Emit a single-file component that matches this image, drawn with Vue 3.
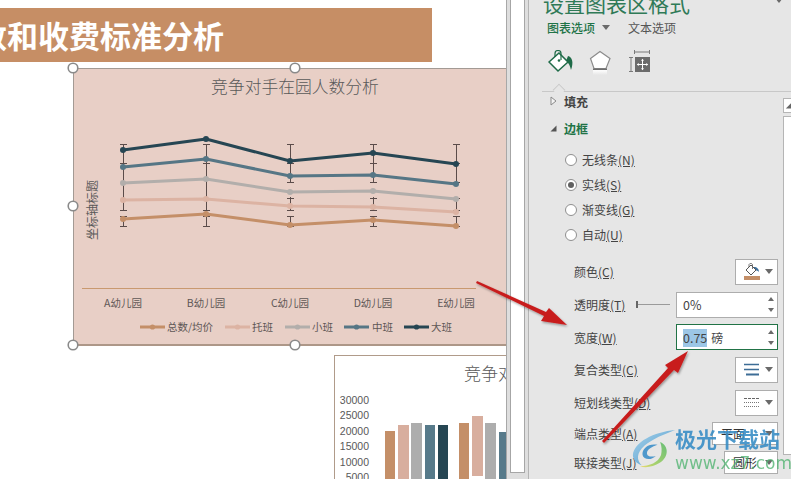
<script setup>
const xs = [123, 206, 290, 373, 456]
const series = [
  { name: '总数/均价', color: '#c48f68', ys: [219, 214, 225, 220, 226], lx: 140, tx: 167 },
  { name: '托班', color: '#dcb3a3', ys: [200, 199, 206, 207, 212], lx: 225, tx: 252 },
  { name: '小班', color: '#b2aeab', ys: [183, 179, 192, 191, 199], lx: 285, tx: 312 },
  { name: '中班', color: '#567685', ys: [167, 159, 176, 175, 184], lx: 344, tx: 372 },
  { name: '大班', color: '#264653', ys: [150, 139, 161, 153, 164], lx: 404, tx: 431 }
]
const pts = (s) => s.ys.map((y, i) => `${xs[i]},${y}`).join(' ')
const cats = ['A幼儿园', 'B幼儿园', 'C幼儿园', 'D幼儿园', 'E幼儿园']
const capsAll = [144, 163, 210, 216, 226]
const capsMid = [182, 198]
const segs = [[144, 183], [197, 210], [216, 226]]
const segsLong = [[144, 210], [216, 226]]
const handles = [[73, 68], [295, 68], [73, 206], [73, 345], [295, 345]]

const yTicks = [['30000', 404], ['25000', 419], ['20000', 435], ['15000', 450], ['10000', 466], ['5000', 481]]
const bars = [
  [385, 10, 431, '#c48f68'], [398, 11, 425, '#d8ae9e'], [411, 11, 423, '#adadad'],
  [425, 10, 425, '#577a8a'], [438, 10, 425, '#264653'], [459, 10, 423, '#c48f68'],
  [472, 11, 416, '#d8ae9e'], [485, 11, 423, '#adadad'], [499, 10, 432, '#577a8a']
]

const radios = [
  { label: '无线条', key: '(N)', on: false },
  { label: '实线', key: '(S)', on: true },
  { label: '渐变线', key: '(G)', on: false },
  { label: '自动', key: '(U)', on: false }
]
</script>

<template>
  <div class="screen">
    <main class="doc">
      <div class="banner">数和收费标准分析</div>

      <svg class="canvas" width="506" height="479" viewBox="0 0 506 479">
        <!-- second chart -->
        <rect x="334.5" y="355.5" width="180" height="130" fill="#fff" stroke="#b09b8a" />
        <text x="464" y="380" class="t2">竞争对手在园人数分析</text>
        <text v-for="t in yTicks" :key="t[0]" x="369" :y="t[1]" text-anchor="end" class="tick">{{ t[0] }}</text>
        <rect v-for="(b, i) in bars" :key="i" :x="b[0]" :width="b[1]" :y="b[2]" height="60" :fill="b[3]" />

        <!-- main chart -->
        <rect x="73.5" y="68.5" width="440" height="276" fill="#e8cfc6" stroke="#a39a94" />
        <line x1="73" y1="345" x2="506" y2="345" stroke="#ad9788" stroke-width="2" />
        <text x="295" y="93" text-anchor="middle" class="t1">竞争对手在园人数分析</text>
        <text transform="translate(97 240) rotate(-90)" class="axis">坐标轴标题</text>

        <g v-for="(x, i) in xs" :key="x" stroke="#5b4c4a" stroke-width="1" shape-rendering="crispEdges">
          <line v-for="(s, j) in (i >= 2 ? segs : segsLong)" :key="j" :x1="x" :x2="x" :y1="s[0]" :y2="s[1]" />
          <line v-for="c in capsAll" :key="c" :x1="x - 3" :x2="x + 4" :y1="c" :y2="c" />
          <template v-if="i >= 2">
            <line v-for="c in capsMid" :key="c" :x1="x - 3" :x2="x + 4" :y1="c" :y2="c" />
          </template>
        </g>

        <g v-for="s in series" :key="s.name">
          <polyline :points="pts(s)" fill="none" :stroke="s.color" stroke-width="3" stroke-linejoin="round" />
          <circle v-for="(y, i) in s.ys" :key="i" :cx="xs[i]" :cy="y" r="3" :fill="s.color" />
        </g>

        <line x1="82" y1="288.5" x2="476" y2="288.5" stroke="#c9996f" />
        <text v-for="(c, i) in cats" :key="c" :x="xs[i]" y="306.5" text-anchor="middle" class="cat">{{ c }}</text>

        <g v-for="s in series" :key="'l' + s.name">
          <line :x1="s.lx" :x2="s.lx + 25" y1="327" y2="327" :stroke="s.color" stroke-width="3" />
          <circle :cx="s.lx + 12.5" cy="327" r="2.6" :fill="s.color" />
          <text :x="s.tx" y="331" class="leg">{{ s.name }}</text>
        </g>

        <circle v-for="(h, i) in handles" :key="i" :cx="h[0]" :cy="h[1]" r="4.8" fill="#fff" stroke="#8a8a8a" stroke-width="1.6" />
      </svg>
    </main>

    <div class="strip"><div class="strip-track"></div></div>

    <aside class="panel">
      <header class="panel-head">
        <div class="panel-title">设置图表区格式</div>
        <i class="caret head-caret"></i>
        <div class="tabs">
          <span class="tab-on">图表选项</span>
          <i class="caret tab-caret"></i>
          <span class="tab-off">文本选项</span>
        </div>
        <div class="icons">
          <svg width="26" height="24" viewBox="0 0 26 24" class="ic">
            <path d="M20 6 C24 7 26 12 23 20 C22 16 21 13 18 11 Z" fill="#1f6b48" />
            <path d="M1 12 L11 3 L20 12 L10 21 Z" fill="#fff" stroke="#1f6b48" stroke-width="1.5" />
            <path d="M7 7 V3.5 A3 3 0 0 1 13 3.5 V10" fill="none" stroke="#1f6b48" stroke-width="1.2" />
            <circle cx="11" cy="10.5" r="1.3" fill="#1f6b48" />
          </svg>
          <svg width="24" height="26" viewBox="0 0 24 26" class="ic ic2">
            <defs>
              <linearGradient id="fade" x1="0" y1="0" x2="0" y2="1">
                <stop offset="0" stop-color="#fff" />
                <stop offset="1" stop-color="#fff" stop-opacity="0" />
              </linearGradient>
            </defs>
            <path d="M11 1.5 L21 8.5 L17 18.5 H5 L1.5 8.5 Z" fill="#fff" stroke="#8c8c8c" stroke-width="1.2" />
            <rect x="4" y="18.5" width="14" height="1.6" fill="#6e6e6e" />
            <rect x="4" y="20" width="14" height="5" fill="url(#fade)" />
          </svg>
          <svg width="24" height="26" viewBox="0 0 24 26" class="ic ic3">
            <path d="M7.500 0 V4 M22.500 0 V4 M7.500 2 H22.500 M2 7.500 H6 M2 21.500 H6 M4 7.500 V21.500" stroke="#7a7a7a" fill="none" />
            <rect x="8" y="7" width="15" height="15" fill="#6b6b6b" />
            <path d="M15.500 9.500 V19.500 M10.500 14.500 H20.500" stroke="#fff" />
            <path d="M15.500 8.800 L17 10.800 H14 Z M15.500 20.200 L17 18.200 H14 Z M9.800 14.500 L11.800 13 V16 Z M21.200 14.500 L19.200 13 V16 Z" fill="#fff" />
          </svg>
        </div>
        <div class="divider"><i class="notch"></i></div>
      </header>

      <div class="panel-body">
        <div class="content">
          <div class="section section-first"><svg width="7" height="10" class="tri" viewBox="0 0 7 10"><path d="M1 1 L6 5 L1 9 Z" fill="#f4f4f4" stroke="#8a8a8a" /></svg><span>填充</span></div>
          <div class="section section-on"><svg width="7" height="7" class="tri" viewBox="0 0 7 7"><path d="M6.500 0.500 V6.500 H0.500 Z" fill="#555" /></svg><span>边框</span></div>

          <div class="radios">
            <label v-for="r in radios" :key="r.key" class="radio">
              <i class="dot" :class="{ 'dot-on': r.on }"></i>
              <span>{{ r.label }}<u>{{ r.key }}</u></span>
            </label>
          </div>

          <div class="form">
            <div class="row">
              <span class="lbl">颜色<u>(C)</u></span>
              <div class="drop">
                <svg width="16" height="18" viewBox="0 0 16 18">
                  <path d="M10 4 C13 4 15 6 15 9 C14 8 13 7 10 7 Z" fill="#3c6f9c" />
                  <path d="M2 7 L7 2 L12 7 L7 12 Z" fill="#fff" stroke="#555" />
                  <path d="M5 4 V1.500 A2 2 0 0 1 8.500 1.500 V6" fill="none" stroke="#555" stroke-width=".8" />
                  <rect x="0" y="13" width="16" height="4" fill="#c48f68" />
                </svg>
                <i class="caret"></i>
              </div>
            </div>

            <div class="row">
              <span class="lbl">透明度<u>(T)</u></span>
              <div class="slider"><i></i></div>
              <div class="spin"><span class="val">0%</span><span class="arrows"><i class="up"></i><i class="down"></i></span></div>
            </div>

            <div class="row row-32">
              <span class="lbl">宽度<u>(W)</u></span>
              <div class="spin spin-on"><span class="val"><b>0.75</b><em>磅</em></span><span class="arrows"><i class="up"></i><i class="down"></i></span></div>
            </div>

            <div class="row">
              <span class="lbl">复合类型<u>(C)</u></span>
              <div class="drop">
                <svg width="16" height="14" viewBox="0 0 16 14"><path d="M0 1.500 H15 M0 6.500 H15" stroke="#3d6d96" stroke-width="1.400" fill="none" /><path d="M2 11.500 H15" stroke="#3d6d96" stroke-width="2" /></svg>
                <i class="caret"></i>
              </div>
            </div>

            <div class="row">
              <span class="lbl">短划线类型<u>(D)</u></span>
              <div class="drop">
                <svg width="16" height="14" viewBox="0 0 16 14"><path d="M0 2.500 H16" stroke="#666" stroke-dasharray="3 1" /><path d="M0 6.500 H16 M0 10.500 H16" stroke="#777" stroke-dasharray="1 1" /></svg>
                <i class="caret"></i>
              </div>
            </div>

            <div class="row row-29">
              <span class="lbl">端点类型<u>(A)</u></span>
              <div class="drop drop-text wide"><span>平面</span><i class="caret"></i></div>
            </div>

            <div class="row row-29">
              <span class="lbl">联接类型<u>(J)</u></span>
              <div class="drop drop-text"><span>圆形</span><i class="caret"></i></div>
            </div>
          </div>
        </div>

        <div class="scroll">
          <div class="scroll-btn"><svg width="7" height="7" viewBox="0 0 7 7"><path d="M7 1 V7 H1 Z" fill="#666" /></svg></div>
          <div class="scroll-track"></div>
        </div>
      </div>
    </aside>

    <svg class="arrows-layer" width="791" height="479" viewBox="0 0 791 479">
      <defs>
        <filter id="sh" x="-20%" y="-20%" width="140%" height="140%">
          <feDropShadow dx="1" dy="1.500" stdDeviation="1.200" flood-color="#000" flood-opacity=".35" />
        </filter>
      </defs>
      <g fill="#c81f1f" filter="url(#sh)">
        <path d="M477 281 L546 312 L549 308 L567 325 L541 321 L544 316 L476 283 Z" />
        <path d="M602 441 L668 368 L665 365 L688 351 L678 373 L674 370 L604 443 Z" />
      </g>
    </svg>

    <div class="mark">
      <svg class="mark-logo" width="44" height="41" viewBox="0 0 50 44" preserveAspectRatio="none">
        <defs>
          <linearGradient id="gb" x1="0" y1="0" x2="1" y2="1">
            <stop offset="0" stop-color="#9fd0ea" />
            <stop offset="1" stop-color="#3d8fc9" />
          </linearGradient>
          <linearGradient id="gg" x1="1" y1="0" x2="0" y2="1">
            <stop offset="0" stop-color="#58b96a" />
            <stop offset=".7" stop-color="#a5d060" />
            <stop offset="1" stop-color="#f0d860" />
          </linearGradient>
        </defs>
        <path d="M49 1 C25 3 2 14 1 28 C1 33 5 37 11 39 C5 33 5 26 14 18 C22 11 38 5 49 1 Z" fill="url(#gb)" opacity=".9" />
        <path d="M29 17 C19 15 11 21 12 28 C13 33 22 34 27 29 C23 30 17 30 17 26 C17 22 23 19 29 17 Z" fill="#3d8fc9" opacity=".9" />
        <path d="M32 14 C42 18 42 30 32 36 C24 41 15 42 9 40 C20 40 30 36 33 28 C34 24 34 19 32 14 Z" fill="url(#gg)" opacity=".9" />
      </svg>
      <div class="mark-text">
        <div class="mark-cn">极光下载站</div>
        <div class="mark-en">www.xz7.com</div>
      </div>
    </div>
  </div>
</template>

<style>
html, body { margin: 0; padding: 0; background: #fff; }
</style>

<style scoped>
.screen {
  position: relative;
  display: flex;
  width: 791px;
  height: 479px;
  overflow: hidden;
  background: #fff;
  font-family: "Noto Sans CJK SC", "Liberation Sans", sans-serif;
  color: #444;
}
.doc { position: relative; width: 506px; flex: none; overflow: hidden; }
.banner {
  position: absolute;
  left: 0;
  top: 8px;
  width: 432px;
  height: 54px;
  background: #c68e65;
  color: #fff;
  font-size: 31px;
  font-weight: 700;
  line-height: 54px;
  text-indent: -24px;
  white-space: nowrap;
  overflow: hidden;
}
.canvas { position: absolute; left: 0; top: 0; }
.t1 { font-size: 16.8px; font-weight: 300; fill: #595959; }
.t2 { font-size: 17px; font-weight: 300; fill: #595959; }
.axis { font-size: 12px; fill: #595959; }
.cat { font-size: 10.500px; fill: #5f5856; }
.leg { font-size: 10.500px; fill: #5f5856; }
.tick { font-size: 10.500px; fill: #595959; font-family: "Liberation Sans", sans-serif; }

.strip {
  flex: none;
  width: 23px;
  box-sizing: border-box;
  padding-left: 3px;
  background: #dedede;
  border-left: 1px solid #a8a8a8;
  border-right: 1px solid #b4b4b4;
}
.strip-track {
  width: 13px;
  height: 472px;
  background: #fff;
  border: solid #a6a6a6;
  border-width: 0 1px 1px 1px;
}
.panel {
  flex: 1;
  min-width: 0;
  display: flex;
  flex-direction: column;
  background: #e6e6e6;
}
.panel-head { flex: none; height: 92px; padding-left: 14px; box-sizing: border-box; position: relative; }
.panel-title {
  height: 16px;
  font-size: 21px;
  line-height: 6px;
  color: #2f7a57;
  white-space: nowrap;
}
.head-caret {
  position: absolute;
  left: 246px;
  top: -2px;
}
.tabs { display: flex; align-items: center; height: 24px; padding-left: 4px; font-size: 12px; margin-top: -1px; }
.tab-on { color: #217346; font-weight: 500; }
.tab-caret { margin: 0 0 0 7px; }
.tab-off { margin-left: 18px; color: #555; }
.icons { display: flex; align-items: flex-start; height: 28px; margin-top: 11px; padding-left: 5px; }
.ic { flex: none; }
.ic2 { margin-left: 15px; }
.ic3 { margin-left: 14px; }
.divider {
  position: absolute;
  left: 13px;
  right: 0;
  bottom: 0;
  height: 1px;
  background: #c8c8c8;
}
.notch {
  position: absolute;
  left: 12px;
  top: -6px;
  width: 9px;
  height: 9px;
  background: #e6e6e6;
  border: solid #c8c8c8;
  border-width: 1px 0 0 1px;
  transform: rotate(45deg) scale(.9);
}

.panel-body { flex: 1; display: flex; min-height: 0; }
.content { flex: 1; min-width: 0; }
.section {
  display: flex;
  align-items: center;
  height: 20px;
  padding-left: 21px;
  font-size: 12px;
  font-weight: 700;
  color: #444;
  position: relative;
}
.section-first { margin-top: -1px; }
.tri { position: absolute; left: 21px; }
.section span { margin-left: 14px; }
.section-on { margin-top: 7px; color: #217346; }
.radios { margin-top: 9px; padding-left: 36px; }
.radio { display: flex; align-items: center; gap: 5px; height: 25px; font-size: 12px; }
.dot {
  width: 10px;
  height: 10px;
  border-radius: 50%;
  border: 1px solid #8f8f8f;
  background: #fff;
  position: relative;
  flex: none;
}
.dot-on::after {
  content: "";
  position: absolute;
  left: 2px;
  top: 2px;
  width: 6px;
  height: 6px;
  border-radius: 50%;
  background: #606060;
}
.form { margin-top: 8px; padding: 0 5px 0 45px; }
.row { display: flex; align-items: center; height: 33px; font-size: 12px; white-space: nowrap; }
.row-32 { height: 32px; }
.row-29 { height: 29px; }
.lbl { flex: none; margin-right: auto; }
.drop {
  flex: none;
  display: flex;
  align-items: center;
  justify-content: space-between;
  padding: 0 4px 0 8px;
  box-sizing: border-box;
  width: 43px;
  height: 26px;
  background: #fff;
  border: 1px solid #adadad;
}
.drop-text { width: 54px; height: 23px; color: #333; }
.wide { width: 66px; }
.caret {
  width: 0;
  height: 0;
  border: 4px solid transparent;
  border-top: 5px solid #6a6a6a;
  border-bottom: 0;
  display: block;
  flex: none;
}
.spin {
  flex: none;
  width: 102px;
  height: 26px;
  box-sizing: border-box;
  display: flex;
  align-items: center;
  justify-content: space-between;
  padding: 0 3px 0 6px;
  background: #fff;
  border: 1px solid #adadad;
}
.spin-on { border-color: #217346; }
.val { font-size: 12.500px; }
.val b { font-weight: 400; background: #9cc6e6; display: inline-block; line-height: 18px; }
.val em { font-style: normal; margin-left: 4px; font-size: 12px; }
.arrows { display: flex; flex-direction: column; gap: 7px; }
.arrows i { width: 0; height: 0; border: 3.500px solid transparent; display: block; }
.arrows .up { border-top: 0; border-bottom: 4px solid #6a6a6a; }
.arrows .down { border-bottom: 0; border-top: 4px solid #6a6a6a; }
.slider {
  flex: none;
  width: 34px;
  height: 1px;
  background: #9a9a9a;
  margin-right: 6px;
  position: relative;
}
.slider i {
  position: absolute;
  left: 0;
  top: -3px;
  width: 2px;
  height: 7px;
  background: #666;
}
.scroll { flex: none; width: 8px; display: flex; flex-direction: column; padding-top: 6px; }
.scroll-btn {
  height: 15px;
  background: #fff;
  border: solid #b5b5b5;
  border-width: 1px 0 1px 1px;
  box-sizing: border-box;
  display: flex;
  align-items: center;
  padding-left: 1px;
}
.scroll-track {
  height: 339px;
  margin-top: 3px;
  background: #fff;
  border: solid #b5b5b5;
  border-width: 1px 0 1px 1px;
  box-sizing: border-box;
}

.arrows-layer { position: absolute; left: 0; top: 0; pointer-events: none; }
.mark { position: absolute; left: 632px; top: 426px; display: flex; pointer-events: none; }
.mark-logo { flex: none; margin-top: 3px; }
.mark-text { margin-left: -1px; }
.mark-cn {
  font-size: 21px;
  font-weight: 700;
  line-height: 24px;
  color: #3a8ec6;
  white-space: nowrap;
  opacity: .9;
}
.mark-en {
  font-family: "DejaVu Sans", sans-serif;
  font-size: 17px;
  line-height: 18px;
  margin-top: 4px;
  color: #55b574;
  white-space: nowrap;
  opacity: .8;
}
</style>
